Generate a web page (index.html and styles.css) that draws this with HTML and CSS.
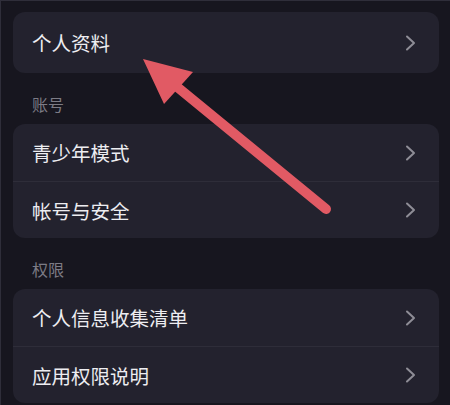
FILE: index.html
```html
<!DOCTYPE html>
<html lang="zh-CN">
  <head>
    <meta charset="UTF-8" />
    <meta name="viewport" content="width=device-width, initial-scale=1.0" />
    <title>设置</title>
    <link rel="stylesheet" href="styles.css">
  </head>
  <body>
    <div class="settings">
      <div class="card">
        <div class="row">
          <span>个人资料</span>
          <svg class="chevron" viewBox="0 0 11 16"><path d="M2 1.5 L9 8 L2 14.5" /></svg>
        </div>
      </div>

      <div class="group-title">账号</div>
      <div class="card">
        <div class="row">
          <span>青少年模式</span>
          <svg class="chevron" viewBox="0 0 11 16"><path d="M2 1.5 L9 8 L2 14.5" /></svg>
        </div>
        <div class="row">
          <span>帐号与安全</span>
          <svg class="chevron" viewBox="0 0 11 16"><path d="M2 1.5 L9 8 L2 14.5" /></svg>
        </div>
      </div>

      <div class="group-title">权限</div>
      <div class="card">
        <div class="row">
          <span>个人信息收集清单</span>
          <svg class="chevron" viewBox="0 0 11 16"><path d="M2 1.5 L9 8 L2 14.5" /></svg>
        </div>
        <div class="row">
          <span>应用权限说明</span>
          <svg class="chevron" viewBox="0 0 11 16"><path d="M2 1.5 L9 8 L2 14.5" /></svg>
        </div>
      </div>
    </div>

    <!-- 标注箭头 -->
    <svg class="pointer" viewBox="0 0 450 405">
      <line x1="176" y1="86" x2="326" y2="209" />
      <polygon points="143,59 193,72 164,104" />
    </svg>
  </body>
</html>
```

FILE: styles.css
```css
html {
  background-color: #17161f;
}
body {
  margin: 0;
  padding: 0;
  min-height: 405px;
  position: relative;
  overflow: hidden;
  font-family: 'Noto Sans CJK SC', 'Noto Sans', sans-serif;
  background-color: #17161f;
  box-shadow: inset 1px 1px 0 #2f2e3a;
}
.settings {
  padding: 12px 11px 0 13px;
}
.card {
  background-color: #23222e;
  border-radius: 12px;
  overflow: hidden;
}
.card:first-child .row {
  height: 61px;
}
.row {
  height: 57px;
  display: flex;
  align-items: center;
  justify-content: space-between;
  padding: 0 23px 0 19px;
  color: #ededf1;
  font-size: 19.5px;
}
.row + .row {
  border-top: 1px solid #2e2d39;
  height: 56px;
}
.chevron {
  width: 11px;
  height: 16px;
  fill: none;
  stroke: #8e8d96;
  stroke-width: 2;
  stroke-linecap: round;
  stroke-linejoin: round;
}
.group-title {
  padding: 20px 0 9px 19px;
  line-height: 22px;
  font-size: 16px;
  color: #7c7b85;
}
.pointer {
  position: absolute;
  top: 0;
  left: 0;
  width: 450px;
  height: 405px;
}
.pointer line {
  stroke: #e15a64;
  stroke-width: 10;
  stroke-linecap: round;
}
.pointer polygon {
  fill: #e15a64;
}
```
